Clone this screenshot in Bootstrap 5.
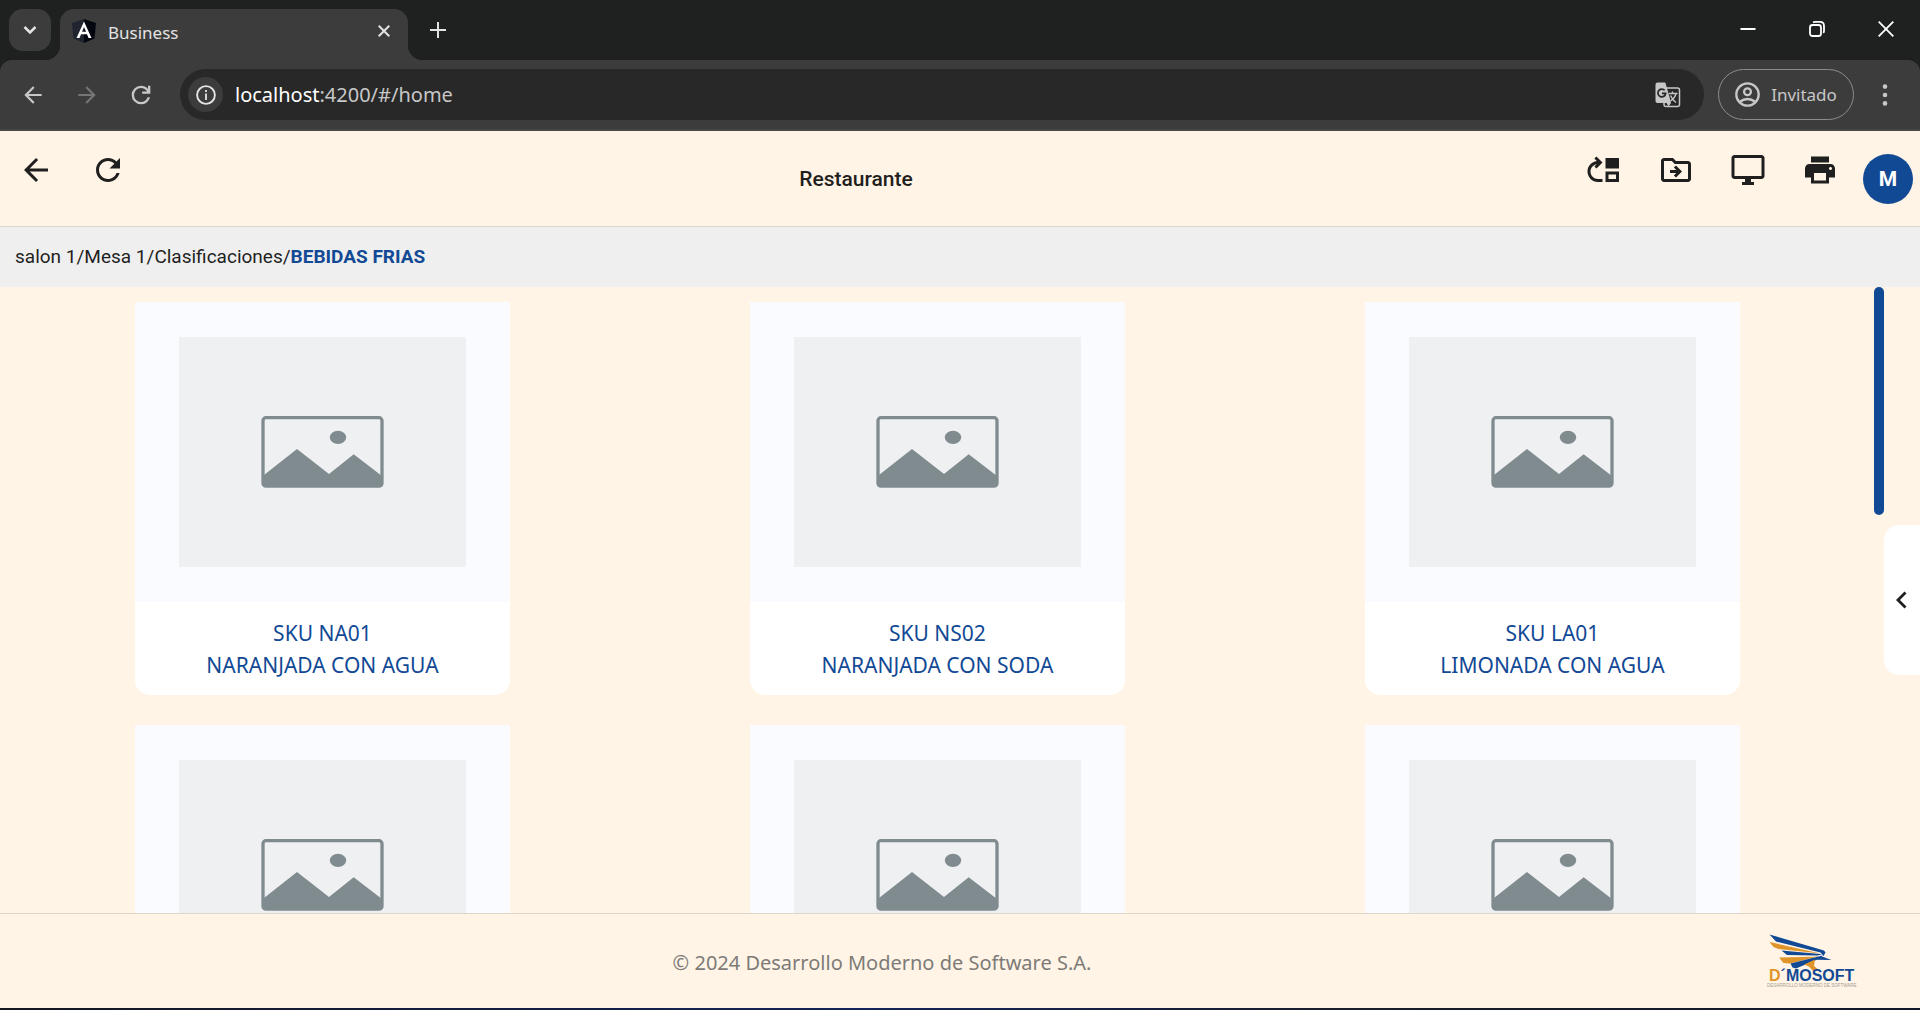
<!DOCTYPE html>
<html lang="es">
<head>
<meta charset="utf-8">
<meta name="viewport" content="width=device-width, initial-scale=1">
<title>Business</title>
<link href="https://cdn.jsdelivr.net/npm/bootstrap@5.3.0/dist/css/bootstrap.min.css" rel="stylesheet">
<style>
:root { --brand: #124995; --cream: #fff4e5; --chrome: #3c3c3c; --strip: #1f2120; }
body { font-family: "Noto Sans", "Open Sans", sans-serif; background: var(--cream); }
svg { display: block; flex: none; }
button { border: 0; background: none; color: inherit; padding: 0; }

.tab-strip { background: var(--strip); height: 60px; color: #e3e3e3; padding-left: 9px; }
.tab-search { width: 42px; height: 42px; border-radius: 14px; background: var(--chrome); margin-top: 9px; }
.browser-tab { position: relative; width: 348px; height: 51px; margin: 9px 0 0 9px; padding: 0 14px 8px 12px; background: var(--chrome); border-radius: 14px 14px 0 0; font-size: 17px; }
.browser-tab::before, .browser-tab::after { content: ""; position: absolute; bottom: 0; width: 14px; height: 14px; }
.browser-tab::before { left: -14px; background: radial-gradient(circle at 0 0, transparent 14px, var(--chrome) 14px); }
.browser-tab::after { right: -14px; background: radial-gradient(circle at 100% 0, transparent 14px, var(--chrome) 14px); }
.tab-close { width: 20px; height: 20px; }
.new-tab { width: 60px; height: 42px; margin-top: 9px; }
.win-btn { width: 69px; height: 50px; color: #fff; }

.toolbar-wrap { background: var(--strip); }
.toolbar { background: var(--chrome); border-radius: 12px 12px 0 0; height: 71px; padding: 0 4px 0 6px; border-bottom: 2px solid #474747; color: #c7c7c7; }
.tool-btn { width: 54px; height: 42px; }
.tool-btn:disabled { color: #757575; }
.omnibox { height: 51px; border-radius: 26px; background: #282828; margin-left: 12px; padding: 0 23px 0 8px; }
.site-info { width: 35px; height: 35px; border-radius: 50%; background: var(--chrome); color: #e3e3e3; }
.url-text { font-size: 20px; color: #c7c7c7; margin-left: 12px; }
.url-text b { font-weight: 400; color: #fff; }
.profile-pill { width: 136px; height: 51px; border: 1px solid #8c8c8c; border-radius: 26px; margin-left: 14px; font-size: 17px; gap: 11px; }
.menu-btn { width: 62px; height: 42px; }

.app-header { height: 96px; border-bottom: 1px solid #ded6c9; color: #1f1f1f; padding-right: 7px; }
.header-btn { width: 72px; height: 54px; padding-bottom: 18px; color: #1f1f1f; }
.header-btn svg { width: 36px; height: 36px; }
.app-title { font: 500 21px/32px Roboto, sans-serif; }
.avatar { width: 50px; height: 50px; border-radius: 50%; background: var(--brand); color: #fff; font: 700 21px/50px Roboto, sans-serif; margin-left: 7px; }
.crumbs { height: 60px; background: #efefef; padding: 0 15px; font: 400 19px/28px Roboto, sans-serif; color: #1f1f1f; }
.crumbs a { color: inherit; text-decoration: none; }
.crumbs [aria-current] { color: var(--brand); font-weight: 700; }

.catalog { padding: 0 14px 0 15px; overflow: hidden; }
.product { width: 375px; margin: 15px auto; border: 0; border-radius: 0 0 15px 15px; background: #fff; overflow: hidden; color: var(--brand); }
.product-name { height: 93px; font-size: 21px; line-height: 32px; font-weight: 400; padding-top: 15px; }
.scroll-thumb { width: 10px; height: 228px; border-radius: 5px; background: var(--brand); }
.drawer-btn { width: 36px; height: 150px; border-radius: 15px 0 0 15px; background: #fff; color: #1f1f1f; }

.app-footer { height: 95px; border-top: 1px solid #ded6c9; color: #7d7b78; font-size: 20px; padding-right: 60px; }
.copyright { padding-top: 4px; }
.bottom-edge { height: 2px; background: linear-gradient(90deg, #14161f, #14235a 45%, #1a1d2b 70%, #11182a); }
</style>
<script src="https://cdn.jsdelivr.net/npm/bootstrap@5.3.0/dist/js/bootstrap.bundle.min.js"></script>
</head>
<body class="vh-100 d-flex flex-column overflow-hidden">

<svg width="0" height="0" class="position-absolute" aria-hidden="true">
  <symbol id="placeholder" viewBox="0 0 375 300">
    <rect width="375" height="300" fill="#fafbfe"/>
    <rect x="44" y="35" width="287" height="230" fill="#eff0f2"/>
    <rect x="128" y="115.700" width="119" height="68.500" rx="3" fill="none" stroke="#808b90" stroke-width="3.300"/>
    <path fill="#808b90" d="M129 173l33-26 32 25 24.700-19.700 27.300 21v9.700q0 2-2 2H131q-2 0-2-2z"/>
    <ellipse cx="203" cy="135.300" rx="8.200" ry="6.600" fill="#808b90"/>
  </symbol>
</svg>

<div class="tab-strip d-flex flex-shrink-0">
  <button class="tab-search d-flex align-items-center justify-content-center" aria-label="Buscar pestañas">
    <svg width="14" height="10" viewBox="0 0 14 10" fill="none" stroke="currentColor" stroke-width="2.500"><path d="M1.500 2l5.500 5.500L12.500 2"/></svg>
  </button>
  <div class="browser-tab d-flex align-items-center">
    <svg width="24" height="24" viewBox="0 0 24 24"><path fill="#20242f" d="M12 0L0 4l1.500 15.500L12 24z"/><path fill="#03060f" d="M12 0l12 4-1.500 15.500L12 24z"/><path fill="#fff" fill-rule="evenodd" d="M12 2.500L4.500 19h3l1.500-3.700h6l1.500 3.700h3zm0 5.600l2 4.700h-4z"/></svg>
    <span class="flex-grow-1 ms-2 ps-1 pt-1">Business</span>
    <button class="tab-close d-flex align-items-center justify-content-center" aria-label="Cerrar pestaña">
      <svg width="12" height="12" viewBox="0 0 12 12" stroke="currentColor" stroke-width="2"><path d="M.7.700l10.600 10.600M11.300.700L.7 11.300"/></svg>
    </button>
  </div>
  <button class="new-tab d-flex align-items-center justify-content-center" aria-label="Nueva pestaña">
    <svg width="16" height="16" viewBox="0 0 16 16" stroke="currentColor" stroke-width="2"><path d="M8 0v16M0 8h16"/></svg>
  </button>
  <div class="ms-auto d-flex">
    <button class="win-btn d-flex align-items-center justify-content-center mt-1" aria-label="Minimizar">
      <svg width="16" height="16" viewBox="0 0 16 16"><path fill="currentColor" d="M.5 7h15v2H.5z"/></svg>
    </button>
    <button class="win-btn d-flex align-items-center justify-content-center mt-1" aria-label="Restaurar">
      <svg width="16" height="16" viewBox="0 0 16 16" fill="none" stroke="currentColor" stroke-width="1.800"><rect x="1" y="4" width="11" height="11" rx="2.500"/><path d="M4 1.500Q5 .900 6 .900h5q4 0 4 4v5q0 1.300-.8 2"/></svg>
    </button>
    <button class="win-btn d-flex align-items-center justify-content-center mt-1" aria-label="Cerrar">
      <svg width="16" height="16" viewBox="0 0 16 16" stroke="currentColor" stroke-width="1.800"><path d="M.7.700l14.600 14.600M15.300.700L.7 15.300"/></svg>
    </button>
  </div>
</div>

<div class="toolbar-wrap flex-shrink-0">
  <div class="toolbar d-flex align-items-center">
    <button class="tool-btn d-flex align-items-center justify-content-center" aria-label="Atrás"><svg width="26" height="26" viewBox="0 0 24 24" fill="currentColor"><path d="M20 11H7.830l5.590-5.590L12 4l-8 8 8 8 1.410-1.410L7.830 13H20z"/></svg></button>
    <button class="tool-btn d-flex align-items-center justify-content-center" aria-label="Adelante" disabled><svg width="26" height="26" viewBox="0 0 24 24" fill="currentColor"><path d="M4 11h12.170l-5.590-5.590L12 4l8 8-8 8-1.410-1.410L16.170 13H4z"/></svg></button>
    <button class="tool-btn d-flex align-items-center justify-content-center" aria-label="Recargar"><svg width="28" height="28" viewBox="0 0 24 24" fill="currentColor"><path d="M12 20q-3.350 0-5.675-2.325Q4 15.350 4 12q0-3.350 2.325-5.675Q8.650 4 12 4q1.725 0 3.300.712 1.575.713 2.700 2.038V4h2v7h-7V9h4.200q-.8-1.400-2.187-2.200Q13.625 6 12 6 9.500 6 7.750 7.750T6 12q0 2.500 1.750 4.250T12 18q1.925 0 3.475-1.100T17.650 14h2.100q-.7 2.650-2.850 4.325Q14.750 20 12 20z"/></svg></button>
    <div class="omnibox d-flex align-items-center flex-grow-1">
      <button class="site-info d-flex align-items-center justify-content-center" aria-label="Información del sitio"><svg width="20" height="20" viewBox="0 0 20 20"><circle cx="10" cy="10" r="8.900" fill="none" stroke="currentColor" stroke-width="1.900"/><path fill="currentColor" d="M9.100 8.500h1.800V15H9.100zM9.100 5h1.800v1.900H9.100z"/></svg></button>
      <span class="url-text flex-grow-1" role="textbox" aria-label="Dirección"><b>localhost</b>:4200/#/home</span>
      <button aria-label="Traducir">
        <svg width="26" height="26" viewBox="0 0 26 26"><rect x="9" y="6" width="15.500" height="18.500" rx="2" fill="none" stroke="#c7c7c7" stroke-width="1.500"/><path fill="#c7c7c7" d="M2.500.500h7.800l4.200 14.500 1.500 6-2.500 3.500L11.500 21h-9q-2 0-2-2V2.500q0-2 2-2z"/><path fill="none" stroke="#282828" stroke-width="1.700" d="M9.700 8.300A3.900 3.900 0 1 0 10.700 11.300H7"/><path fill="none" stroke="#c7c7c7" stroke-width="1.400" d="M14 11.500h8.500M17.500 9.500v2M21 11.500q-1 4.500-5.500 7.500M15.500 13.500q2 4.500 5.500 7"/></svg>
      </button>
    </div>
    <button class="profile-pill d-flex align-items-center justify-content-center" aria-label="Perfil Invitado">
      <svg width="25" height="25" viewBox="0 0 25 25" fill="none" stroke="currentColor" stroke-width="2.300"><circle cx="12.500" cy="12.500" r="11.200"/><circle cx="12.500" cy="9.800" r="3.400"/><path d="M4.500 20q8-6 16 0"/></svg>
      Invitado
    </button>
    <button class="menu-btn d-flex align-items-center justify-content-center" aria-label="Menú"><svg width="6" height="22" viewBox="0 0 6 22" fill="currentColor"><circle cx="3" cy="2.600" r="2.300"/><circle cx="3" cy="11" r="2.300"/><circle cx="3" cy="19.400" r="2.300"/></svg></button>
  </div>
</div>

<header class="app-header d-flex align-items-center flex-shrink-0">
  <button class="header-btn d-flex align-items-center justify-content-center" aria-label="Volver"><svg viewBox="0 0 24 24" fill="currentColor"><path d="M20 11H7.830l5.590-5.590L12 4l-8 8 8 8 1.410-1.410L7.830 13H20z"/></svg></button>
  <button class="header-btn d-flex align-items-center justify-content-center" aria-label="Actualizar"><svg viewBox="0 0 24 24" fill="currentColor"><path d="M17.650 6.350C16.200 4.900 14.210 4 12 4c-4.420 0-7.990 3.580-7.990 8s3.570 8 7.990 8c3.730 0 6.840-2.550 7.730-6h-2.080c-.82 2.330-3.040 4-5.650 4-3.310 0-6-2.690-6-6s2.690-6 6-6c1.660 0 3.140.690 4.220 1.780L13 11h7V4z"/></svg></button>
  <h1 class="app-title flex-grow-1 text-center m-0">Restaurante</h1>
  <button class="header-btn d-flex align-items-center justify-content-center" aria-label="Mover mesa"><svg viewBox="0 0 24 24" fill="currentColor"><path d="M3 13c0-2.450 1.760-4.470 4.080-4.910L5.590 9.590 7 11l4-4.010L7 3 5.590 4.410l1.580 1.580v.060C3.700 6.460 1 9.420 1 13c0 3.870 3.130 7 7 7h3v-2H8c-2.760 0-5-2.240-5-5z"/><path fill-rule="evenodd" d="M13 13v7h9v-7zm7 5h-5v-3h5zM13 4h9v7h-9z"/></svg></button>
  <button class="header-btn d-flex align-items-center justify-content-center" aria-label="Mover archivo"><svg viewBox="0 0 24 24" fill="currentColor"><path d="M20 6h-8l-2-2H4c-1.100 0-2 .900-2 2v12c0 1.100.900 2 2 2h16c1.100 0 2-.9 2-2V8c0-1.100-.9-2-2-2zm0 12H4V6h5.170l2 2H20z"/><path d="M12.160 12H8v2h4.160l-1.590 1.590L11.990 17 16 13.010 11.990 9l-1.410 1.410z"/></svg></button>
  <button class="header-btn d-flex align-items-center justify-content-center" aria-label="Pantalla"><svg viewBox="0 0 24 24" fill="currentColor"><path d="M21 2H3c-1.100 0-2 .900-2 2v12c0 1.100.900 2 2 2h7v2H8v2h8v-2h-2v-2h7c1.100 0 2-.9 2-2V4c0-1.100-.9-2-2-2zm0 14H3V4h18z"/></svg></button>
  <button class="header-btn d-flex align-items-center justify-content-center" aria-label="Imprimir"><svg viewBox="0 0 24 24" fill="currentColor"><path d="M19 8H5c-1.660 0-3 1.340-3 3v6h4v4h12v-4h4v-6c0-1.660-1.340-3-3-3zm-3 11H8v-5h8zm3-7c-.55 0-1-.45-1-1s.45-1 1-1 1 .450 1 1-.45 1-1 1zm-1-9H6v4h12z"/></svg></button>
  <button class="avatar" aria-label="Cuenta">M</button>
</header>

<nav class="crumbs d-flex align-items-center flex-shrink-0" aria-label="Ruta">
  <a href="#salon">salon 1</a>/<a href="#mesa">Mesa 1</a>/<a href="#clasificaciones">Clasificaciones</a>/<span aria-current="page">BEBIDAS FRIAS</span>
</nav>

<main class="d-flex flex-grow-1 overflow-hidden">
  <div class="catalog flex-grow-1">
    <div class="row g-0">
      <div class="col-4"><article class="card product"><svg width="375" height="300" role="img" aria-label="Sin imagen"><use href="#placeholder"/></svg><div class="product-name text-center">SKU NA01<br>NARANJADA CON AGUA</div></article></div>
      <div class="col-4"><article class="card product"><svg width="375" height="300" role="img" aria-label="Sin imagen"><use href="#placeholder"/></svg><div class="product-name text-center">SKU NS02<br>NARANJADA CON SODA</div></article></div>
      <div class="col-4"><article class="card product"><svg width="375" height="300" role="img" aria-label="Sin imagen"><use href="#placeholder"/></svg><div class="product-name text-center">SKU LA01<br>LIMONADA CON AGUA</div></article></div>
      <div class="col-4"><article class="card product"><svg width="375" height="300" role="img" aria-label="Sin imagen"><use href="#placeholder"/></svg></article></div>
      <div class="col-4"><article class="card product"><svg width="375" height="300" role="img" aria-label="Sin imagen"><use href="#placeholder"/></svg></article></div>
      <div class="col-4"><article class="card product"><svg width="375" height="300" role="img" aria-label="Sin imagen"><use href="#placeholder"/></svg></article></div>
    </div>
  </div>
  <div class="scroll-thumb flex-shrink-0"></div>
  <button class="drawer-btn align-self-center flex-shrink-0 d-flex align-items-center justify-content-center" aria-label="Abrir panel"><svg width="12" height="18" viewBox="0 0 12 18" fill="none" stroke="currentColor" stroke-width="2.800"><path d="M9.500 1.500L2 9l7.500 7.500"/></svg></button>
</main>

<footer class="app-footer d-flex align-items-center flex-shrink-0">
  <div class="copyright flex-grow-1 text-center">© 2024 Desarrollo Moderno de Software S.A.</div>
  <svg width="96" height="60" viewBox="0 -2 96 60" role="img" aria-label="D´MOSOFT">
    <path fill="#124995" d="M5.500 1.500L60 17.500l1.500 2-2 3.500-3-3.500L12 8.500z"/>
    <path fill="#e0952a" d="M5.500 9l51 11.500-42-4.500-5-2z"/>
    <path fill="#124995" d="M17.500 17.500l38.500 3.500 2 .500-5 1-30-.5z"/>
    <path fill="#e0952a" d="M15 24.500l36-.7 6-1-31 7.700-6.500-.500z"/>
    <path fill="#124995" d="M26.500 30.500l32-8-1.500 2.500-25 10.500-3.500-1z"/>
    <path fill="#124995" d="M58 23.500l9.500 3.500-15-.3z"/>
    <path fill="#e0952a" d="M51 26.500l-11 5 5 2 3.500 4h7l-5.500-4.500z"/>
    <text y="48" font-family="Liberation Sans, sans-serif" font-weight="700" font-size="16"><tspan x="5" fill="#e0952a">D</tspan><tspan fill="#124995">´MOSOFT</tspan></text>
    <text x="3" y="54" font-family="Liberation Sans, sans-serif" font-size="4.500" fill="#a39d94">DESARROLLO MODERNO DE SOFTWARE</text>
  </svg>
</footer>
<div class="bottom-edge flex-shrink-0"></div>
</body>
</html>
